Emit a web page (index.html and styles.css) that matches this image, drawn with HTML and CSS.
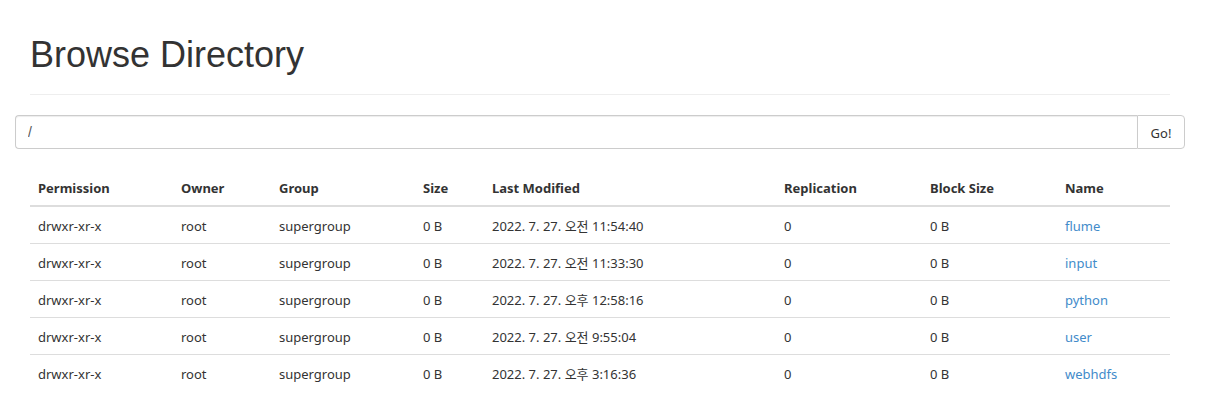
FILE: index.html
```html
<!DOCTYPE html>
<html>
<head>
<meta charset="utf-8">
<title>Browse Directory</title>
<link rel="stylesheet" href="styles.css">
</head>
<body>
<div class="container">
  <div class="page-header"><h1>Browse Directory</h1></div>
  <div class="row">
    <form class="input-group">
      <input type="text" class="form-control" value="/">
      <button class="btn" type="button">Go!</button>
    </form>
  </div>
  <div class="spacer"></div>
  <table class="table">
    <colgroup>
      <col class="c-perm"><col class="c-owner"><col class="c-group"><col class="c-size">
      <col class="c-mod"><col class="c-rep"><col class="c-block"><col class="c-name">
    </colgroup>
    <thead>
      <tr><th>Permission</th><th>Owner</th><th>Group</th><th>Size</th><th>Last Modified</th><th>Replication</th><th>Block Size</th><th>Name</th></tr>
    </thead>
    <tbody>
      <tr><td>drwxr-xr-x</td><td>root</td><td>supergroup</td><td>0 B</td><td>2022. 7. 27. 오전 11:54:40</td><td>0</td><td>0 B</td><td><a href="#">flume</a></td></tr>
      <tr><td>drwxr-xr-x</td><td>root</td><td>supergroup</td><td>0 B</td><td>2022. 7. 27. 오전 11:33:30</td><td>0</td><td>0 B</td><td><a href="#">input</a></td></tr>
      <tr><td>drwxr-xr-x</td><td>root</td><td>supergroup</td><td>0 B</td><td>2022. 7. 27. 오후 12:58:16</td><td>0</td><td>0 B</td><td><a href="#">python</a></td></tr>
      <tr><td>drwxr-xr-x</td><td>root</td><td>supergroup</td><td>0 B</td><td>2022. 7. 27. 오전 9:55:04</td><td>0</td><td>0 B</td><td><a href="#">user</a></td></tr>
      <tr><td>drwxr-xr-x</td><td>root</td><td>supergroup</td><td>0 B</td><td>2022. 7. 27. 오후 3:16:36</td><td>0</td><td>0 B</td><td><a href="#">webhdfs</a></td></tr>
    </tbody>
  </table>
</div>
</body>
</html>
```
FILE: styles.css
```css
* { box-sizing: border-box; }
body {
  margin: 0;
  background: #fff;
  color: #333;
  font-family: "Noto Sans", "Noto Sans CJK KR", sans-serif;
  font-size: 13px;
  line-height: 20px;
}
.container {
  width: 1170px;
  margin-left: 15px;
  padding: 0 15px;
}
.page-header {
  margin: 35px 0 20px;
  padding-bottom: 9px;
  border-bottom: 1px solid #eee;
}
.page-header h1 {
  margin: 0 0 10px;
  font-family: "Liberation Sans", Arial, sans-serif;
  font-weight: 400;
  font-size: 36px;
  line-height: 40px;
  color: #333;
}
.row { margin: 0 -15px; }
.input-group {
  display: flex;
  margin: 0;
  height: 34px;
}
.form-control {
  flex: 1;
  height: 34px;
  margin: 0;
  padding: 6px 12px;
  border: 1px solid #ccc;
  border-right: 0;
  border-radius: 4px 0 0 4px;
  font-family: "Liberation Sans", Arial, sans-serif;
  font-size: 14px;
  color: #555;
  box-shadow: inset 0 1px 1px rgba(0,0,0,.075);
  outline: none;
}
.btn {
  width: 48px;
  height: 34px;
  margin: 0;
  padding: 1px 0 0;
  border: 1px solid #ccc;
  border-radius: 0 4px 4px 0;
  background: #fff;
  color: #333;
  font-family: "Noto Sans", sans-serif;
  font-size: 13px;
}
.spacer { height: 20px; }
.table {
  width: 100%;
  border-collapse: collapse;
  table-layout: fixed;
}
.table th, .table td {
  padding: 9px 8px 7px;
  text-align: left;
  vertical-align: top;
  line-height: 20px;
  white-space: nowrap;
}
.table th {
  font-weight: 700;
  color: #333;
  border-bottom: 2px solid #ddd;
}
.table td { border-bottom: 1px solid #ddd; }
.table tbody tr:last-child td { border-bottom: 0; }
.table a { color: #428bca; text-decoration: none; }
.c-perm { width: 143px; }
.c-owner { width: 98px; }
.c-group { width: 144px; }
.c-size { width: 69px; }
.c-mod { width: 292px; }
.c-rep { width: 146px; }
.c-block { width: 135px; }
.c-name { width: 113px; }
```
